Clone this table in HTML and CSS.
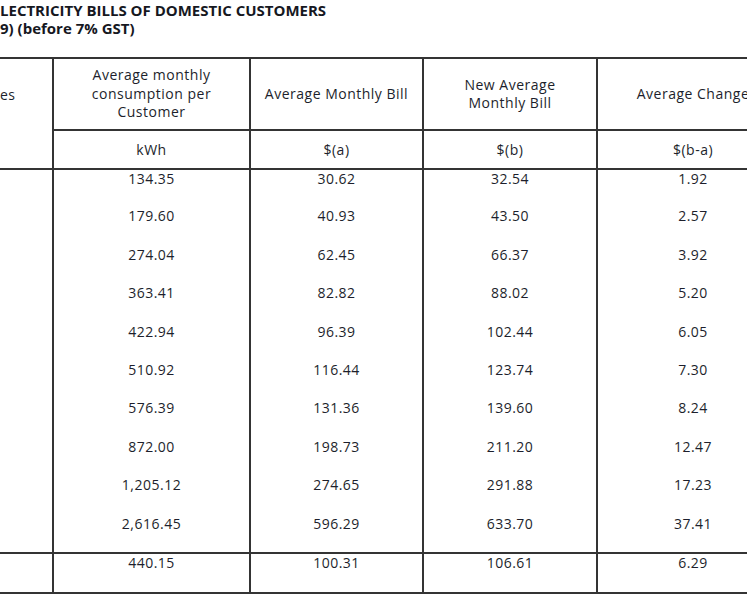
FILE: index.html
```html
<!DOCTYPE html>
<html>
<head>
<meta charset="utf-8">
<link rel="stylesheet" href="styles.css">
</head>
<body>
<div class="page">
  <h1 class="title">LECTRICITY BILLS OF DOMESTIC CUSTOMERS<br>9) (before 7% GST)</h1>
  <table class="bills">
    <colgroup>
      <col class="c0"><col class="c1"><col class="c2"><col class="c3"><col class="c4">
    </colgroup>
    <thead>
      <tr class="h1">
        <th class="first" rowspan="2">es</th>
        <th>Average monthly<br>consumption per<br>Customer</th>
        <th>Average Monthly Bill</th>
        <th class="tight">New Average<br>Monthly Bill</th>
        <th>Average Change</th>
      </tr>
      <tr class="h2">
        <th>kWh</th>
        <th>$(a)</th>
        <th>$(b)</th>
        <th>$(b-a)</th>
      </tr>
    </thead>
    <tbody>
      <tr><td class="first"></td><td>134.35</td><td>30.62</td><td>32.54</td><td>1.92</td></tr>
      <tr><td class="first"></td><td>179.60</td><td>40.93</td><td>43.50</td><td>2.57</td></tr>
      <tr><td class="first"></td><td>274.04</td><td>62.45</td><td>66.37</td><td>3.92</td></tr>
      <tr><td class="first"></td><td>363.41</td><td>82.82</td><td>88.02</td><td>5.20</td></tr>
      <tr><td class="first"></td><td>422.94</td><td>96.39</td><td>102.44</td><td>6.05</td></tr>
      <tr><td class="first"></td><td>510.92</td><td>116.44</td><td>123.74</td><td>7.30</td></tr>
      <tr><td class="first"></td><td>576.39</td><td>131.36</td><td>139.60</td><td>8.24</td></tr>
      <tr><td class="first"></td><td>872.00</td><td>198.73</td><td>211.20</td><td>12.47</td></tr>
      <tr><td class="first"></td><td>1,205.12</td><td>274.65</td><td>291.88</td><td>17.23</td></tr>
      <tr><td class="first"></td><td>2,616.45</td><td>596.29</td><td>633.70</td><td>37.41</td></tr>
    </tbody>
    <tfoot>
      <tr class="total"><td class="first"></td><td>440.15</td><td>100.31</td><td>106.61</td><td>6.29</td></tr>
    </tfoot>
  </table>
</div>
</body>
</html>
```
FILE: styles.css
```css
html, body {
  margin: 0;
  padding: 0;
  background: #fff;
  overflow: hidden;
}
.page {
  width: 789px;
  font-family: "Open Sans", "Liberation Sans", sans-serif;
  color: #1d1f2c;
}
.title {
  margin: 0;
  padding-top: 1px;
  font-size: 15px;
  line-height: 18px;
  font-weight: 700;
  letter-spacing: 0;
  color: #16181f;
  height: 56px;
}
.bills {
  border-collapse: collapse;
  table-layout: fixed;
  width: 789px;
  font-size: 14px;
  letter-spacing: 0.5px;
}
.c0 { width: 53px; }
.c1 { width: 197px; }
.c2 { width: 173px; }
.c3 { width: 174px; }
.c4 { width: 192px; }
.bills th, .bills td {
  border-left: 2px solid #343434;
  border-right: 2px solid #343434;
  padding: 0;
  text-align: center;
  font-weight: 400;
}
.bills th.first, .bills td.first {
  border-left: none;
  text-align: left;
}
.bills thead tr.h1 th {
  border-top: 2px solid #343434;
  border-bottom: 2px solid #343434;
  height: 70px;
  line-height: 18.5px;
}
.bills thead tr.h1 th.first {
  vertical-align: top;
  padding-top: 27px;
}
.bills th.tight { line-height: 17px; }
.bills thead tr.h2 th {
  border-bottom: 2px solid #343434;
  height: 37px;
}
.bills tbody td {
  height: 38.4px;
  vertical-align: top;
  line-height: 18px;
  padding-top: 0;
  box-sizing: border-box;
}
.bills tfoot td {
  border-top: 2px solid #343434;
  border-bottom: 2px solid #343434;
  height: 38px;
  vertical-align: top;
  line-height: 18px;
  padding-top: 0;
}
```
